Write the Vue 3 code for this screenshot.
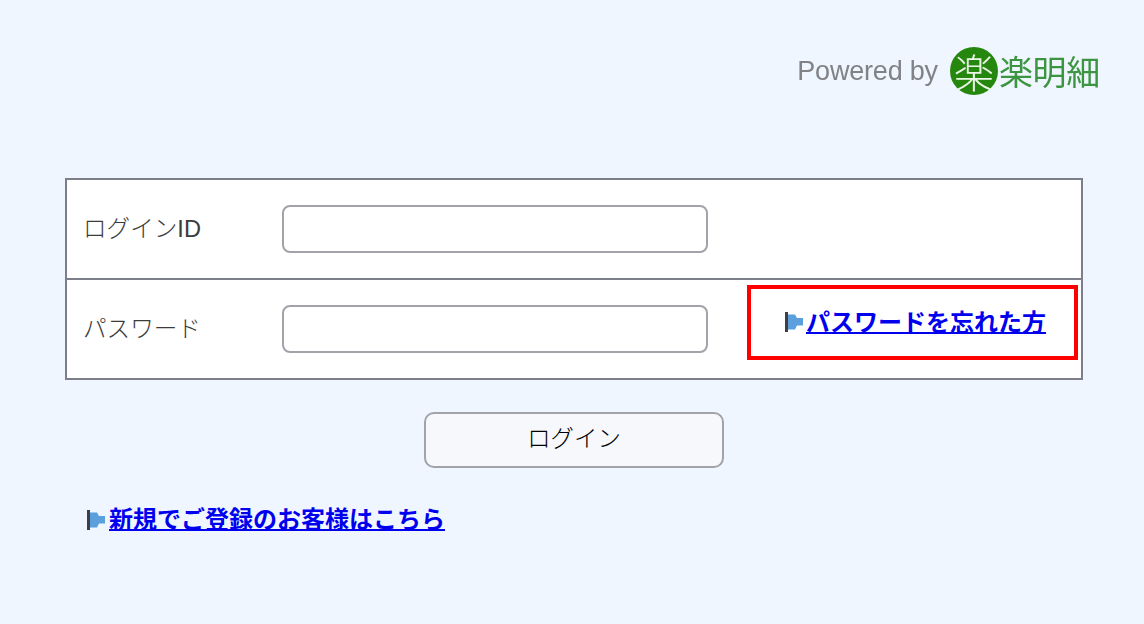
<script setup>
const rows = [
  { label: 'ログインID', forgot: false },
  { label: 'パスワード', forgot: true }
]
</script>

<template>
  <main class="page">
    <header class="brand">
      <span class="powered">Powered by</span>
      <span class="mark">楽</span>
      <span class="name">楽明細</span>
    </header>

    <section class="form-table">
      <div v-for="row in rows" :key="row.label" class="row">
        <label class="label">{{ row.label }}</label>
        <input class="field" type="text" />
        <div v-if="row.forgot" class="forgot">
          <svg class="arrow" width="18" height="20" viewBox="0 0 18 20"><rect x="0" y="0" width="3" height="20" fill="#3c3f48"/><path d="M3 2.5H10L12 6H18V13.5H12L10 17.5H3Z" fill="#5b9fdc"/></svg>
          <a href="#" class="link">パスワードを忘れた方</a>
        </div>
      </div>
    </section>

    <div class="actions">
      <button class="login" type="button">ログイン</button>
    </div>

    <div class="signup">
      <svg class="arrow" width="18" height="20" viewBox="0 0 18 20"><rect x="0" y="0" width="3" height="20" fill="#3c3f48"/><path d="M3 2.5H10L12 6H18V13.5H12L10 17.5H3Z" fill="#5b9fdc"/></svg>
      <a href="#" class="link">新規でご登録のお客様はこちら</a>
    </div>
  </main>
</template>

<style>
html, body { margin: 0; background: #eff6ff; }
</style>

<style scoped>
.page {
  box-sizing: border-box;
  height: 624px;
  padding: 44px 44px 0 65px;
  background: #eff6ff;
  font-family: "Liberation Sans", "Noto Sans CJK JP", sans-serif;
  overflow: hidden;
}
.brand {
  display: flex;
  align-items: center;
  justify-content: flex-end;
  height: 54px;
  filter: blur(0.5px);
}
.powered {
  font-size: 27px;
  letter-spacing: -0.2px;
  color: #808285;
  margin-right: 12px;
}
.mark {
  display: flex;
  align-items: center;
  justify-content: center;
  width: 48px;
  height: 48px;
  border-radius: 50%;
  background: #26870f;
  color: #eaf5e6;
  font-family: "Noto Sans CJK JP", sans-serif;
  font-size: 40px;
  font-weight: 300;
  line-height: 1;
}
.name {
  font-family: "Noto Sans CJK JP", sans-serif;
  font-size: 34px;
  font-weight: 400;
  letter-spacing: -0.3px;
  line-height: 1;
  color: #3c9540;
  margin-left: 1px;
}
.form-table {
  box-sizing: border-box;
  width: 1018px;
  margin-top: 80px;
  background: #fff;
  border: 2px solid #7c7f8a;
  border-bottom-width: 0;
}
.row {
  box-sizing: border-box;
  display: flex;
  align-items: center;
  height: 100px;
  border-bottom: 2px solid #7c7f8a;
  padding-left: 16px;
}
.label {
  width: 199px;
  padding-bottom: 5px;
  font-size: 23.6px;
  font-weight: 300;
  color: #3b3b3b;
}
.field {
  box-sizing: border-box;
  width: 426px;
  height: 48px;
  padding: 0 10px;
  background: #fff;
  border: 2px solid #a2a3a9;
  border-radius: 8px;
  outline: none;
}
.forgot {
  box-sizing: border-box;
  display: flex;
  align-items: center;
  width: 331px;
  height: 75px;
  margin-left: 39px;
  margin-top: -14px;
  padding: 0 0 0 34px;
  border: 4px solid #ff0000;
  font-size: 24px;
}
.arrow { flex: none; margin-right: 3px; }
.link {
  color: #0000ee;
  font-weight: 700;
  margin-bottom: 4px;
  text-decoration: underline;
  text-decoration-thickness: 2px;
  white-space: nowrap;
}
.actions {
  display: flex;
  justify-content: center;
  margin-top: 32px;
  width: 1018px;
}
.login {
  box-sizing: border-box;
  width: 300px;
  height: 56px;
  padding: 0 0 7px;
  background: #f7f8fb;
  border: 2px solid #a2a3a9;
  border-radius: 10px;
  font-family: inherit;
  font-size: 23.4px;
  font-weight: 300;
  color: #000;
}
.signup {
  display: flex;
  align-items: center;
  margin-top: 32px;
  padding-left: 22px;
  font-size: 24px;
}
.signup .arrow { margin-right: 4px; }
</style>
